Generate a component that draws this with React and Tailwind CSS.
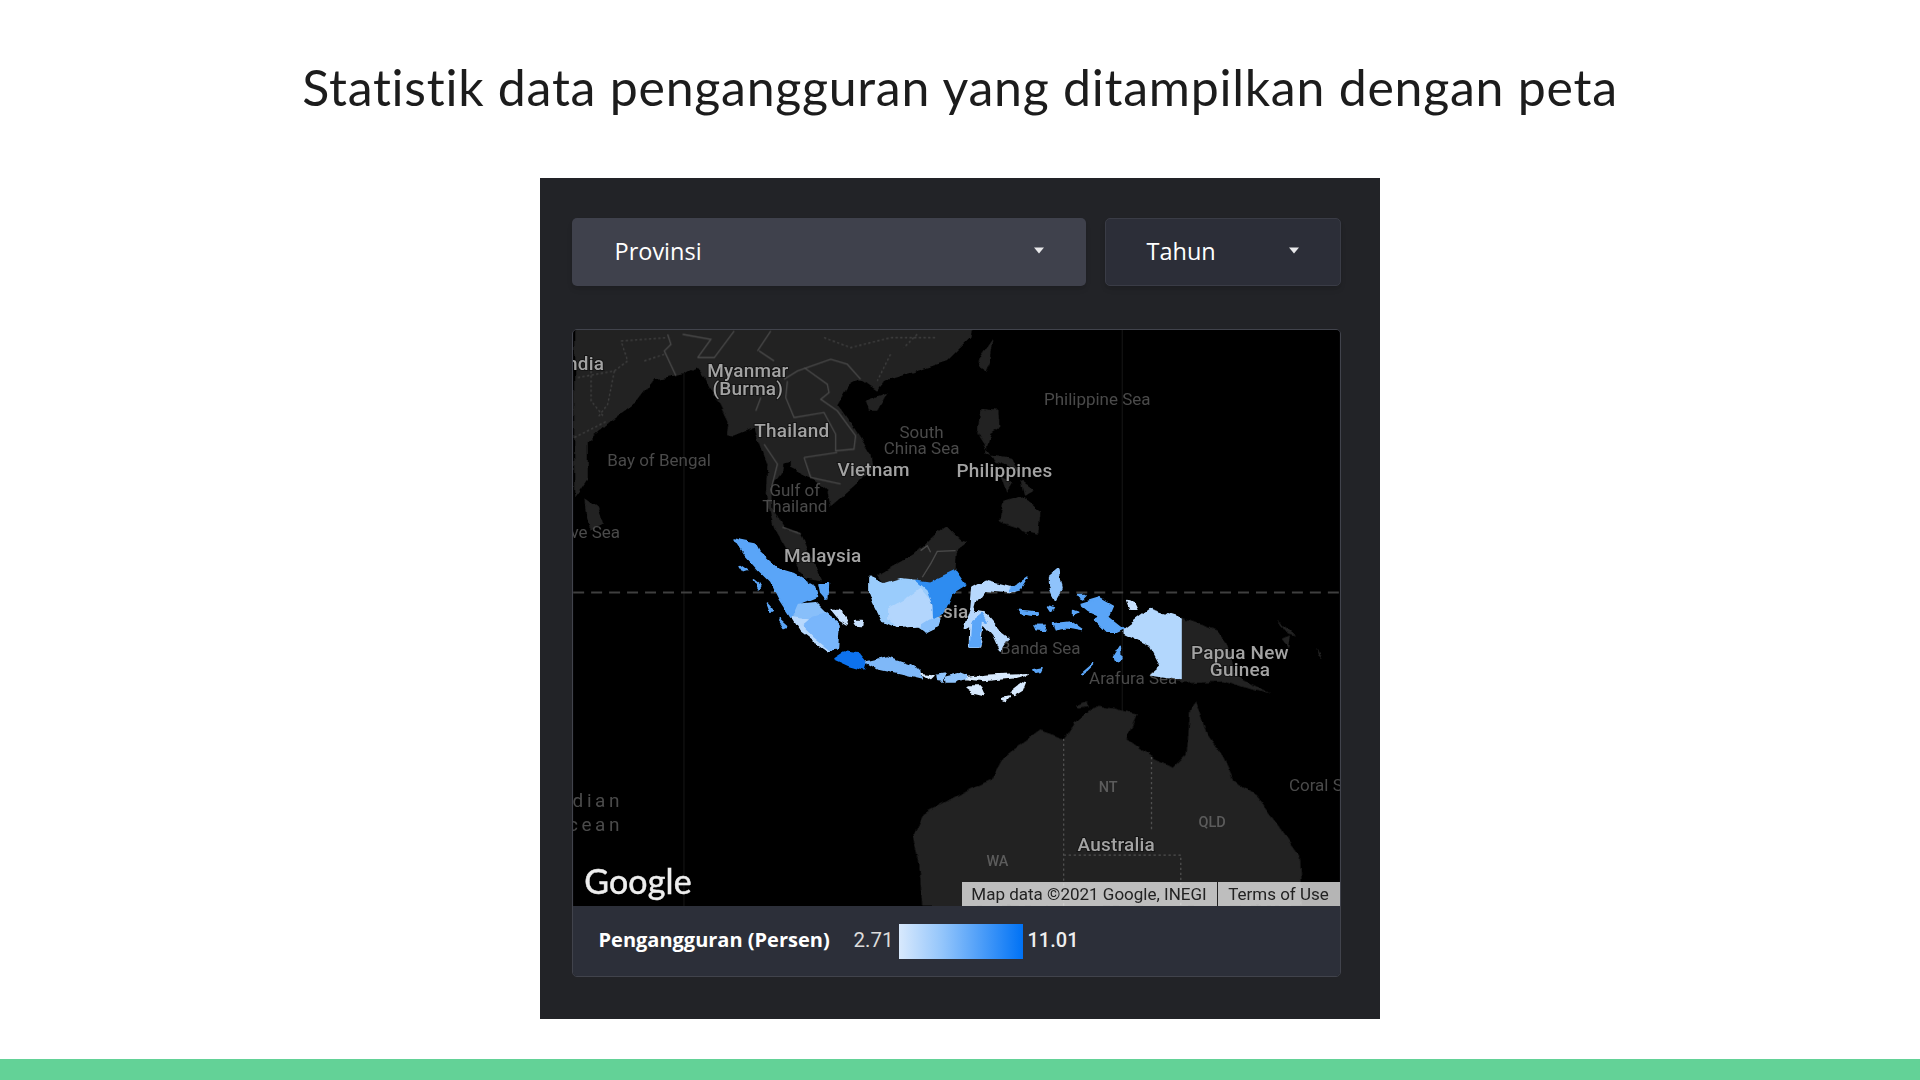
const LAND = "#232323";
const Z2 = "translate(570 320) scale(0.3333)";
const Z3 = "translate(700 510) scale(0.3333)";
const Z4 = "translate(960 510) scale(0.3333)";
const Z6 = "translate(940 700) scale(0.3333)";

const sea = { fontFamily: "Roboto, sans-serif", fontSize: 17, fill: "#4a4a4a" };
const place = { fontFamily: "Roboto, sans-serif", fontSize: 19, fontWeight: 500, letterSpacing: 0.2, fill: "#a3a3a3", stroke: "#000", strokeOpacity: 0.4, strokeWidth: 2, paintOrder: "stroke" };
const state = { fontFamily: "Roboto, sans-serif", fontSize: 14.5, fontWeight: 500, fill: "#5c5c5c" };

function P({ c, d, w = 5 }) {
  return <path fill={c} stroke={c} strokeWidth={w} strokeLinejoin="round" d={d} />;
}

function MapDrawing() {
  return (
    <svg viewBox="572 329 768 577" className="block w-full h-full">
      <defs>
        <filter id="rough" x="-5%" y="-5%" width="110%" height="110%">
          <feTurbulence type="fractalNoise" baseFrequency="0.09" numOctaves="2" seed="4" result="n" />
          <feDisplacementMap in="SourceGraphic" in2="n" scale="6" xChannelSelector="R" yChannelSelector="G" />
        </filter>
        <clipPath id="papua">
          <rect x="1000" y="560" width="181.7" height="200" />
        </clipPath>
      </defs>
      <rect x="572" y="329" width="768" height="577" fill="#000" />
      <path d="M683 329V906M1122 329V906" stroke="#171717" strokeWidth="1" />

      <g filter="url(#rough)">
        <g transform={Z2}>
          <path fill={LAND} d="M10 0L1210 0L1200 50L1130 120L1040 150L940 180L920 210L870 175L830 200L800 250L850 320L900 400L905 440L860 490L780 560L770 510L720 470L660 440L660 420L635 425L630 460L600 500L605 560L640 620L690 640L730 730L755 780L700 770L650 690L610 620L585 520L590 430L560 350L550 320L490 345L465 340L470 300L440 240L400 170L375 140L340 160L250 175L200 240L120 300L50 360L50 470L10 530Z" />
          <path fill={LAND} d="M40 530L80 560L100 610L60 630L45 590ZM885 240L950 215L920 270L895 270Z" />
        </g>
        <g fill={LAND}>
          <path d="M977 360L993 338L990 360L985 372ZM980 408L998 410L999 427L990 433L985 453L1012 457L1018 470L995 462L977 433Z" />
          <path d="M1004 500L1020 495L1040 510L1038 533L1025 530L1015 525L1000 520Z" />
          <path d="M1000 475L1012 482L1006 492ZM1020 480L1034 490L1024 496Z" />
        </g>
        <g transform={Z6} fill={LAND}>
          <path d="M-84 410L-50 340L80 270L150 240L190 170L300 90L370 115L400 70L470 15L590 40L560 115L640 175L700 200L740 160L750 30L765 0L800 100L850 170L880 240L950 290L1010 370L1080 470L1085 540L1085 620L-55 620L-65 480Z" />
          <path d="M405 20L440 5L450 20L415 25Z" />
        </g>
        <g transform={Z3}>
          <path fill={LAND} d="M530 195L570 170L640 130L700 75L740 45L780 85L800 92L770 115L765 180L690 215L650 210L600 205L550 220Z" />
        </g>
        <g transform={Z4} fill={LAND}>
          <path d="M640 325L665 322L770 360L800 400L830 500L940 555L850 530L790 510L665 517L640 510Z" />
          <path d="M950 325L1010 375L985 370ZM965 385L990 375L985 410ZM1065 410L1090 445L1075 435Z" />
          <path d="M340 640L400 590L530 610L500 660L340 660ZM110 30L170 0L240 0L235 40L200 70L170 50Z" />
        </g>
      </g>

      <g transform={Z2}>
        <g fill="none" stroke="#4a4a4a" strokeWidth="4">
          <path d="M640 175L680 150L780 115L830 130L870 175M650 180L645 230L670 290L760 275L795 340L795 390L850 385L855 345L800 270L750 235L775 215L770 190L700 140" />
          <path d="M555 270L570 230M580 370L620 430L600 510M700 410L800 395M700 410L720 470L810 490M490 30L430 110L380 110M560 90L600 30M290 40L300 70L280 90L315 165M335 40L420 55L380 110M565 90L610 120M635 620L690 640" />
        </g>
        <g fill="none" stroke="#474747" strokeWidth="3.5" strokeDasharray="7 7">
          <path d="M150 60L290 50M20 170L130 150L170 120L150 60M220 120L280 100M60 150L60 240L100 290M130 150L110 250L80 290M10 350L110 300M760 50L840 80L960 50L1100 50M960 100L920 180M1040 40L1000 80" />
        </g>
      </g>
      <g transform={Z3}>
        <path fill="none" stroke="#4d4d4d" strokeWidth="4" d="M660 120L680 105L690 125M765 120L710 122L690 160L665 200" />
      </g>
      <g transform={Z6} fill="none" stroke="#4f4f4f" strokeWidth="4" strokeDasharray="7 8">
        <path d="M370 115V620M634 170V395M370 465H722V620" />
      </g>

      <path d="M572 592H1340" stroke="#3f3f3f" strokeWidth="2" strokeDasharray="11 7" />

      <text {...place} x="603" y="369" textAnchor="end">India</text>
      <text {...place} x="747" y="376" textAnchor="middle">Myanmar</text>
      <text {...place} x="747" y="394" textAnchor="middle">(Burma)</text>
      <text {...place} x="791" y="436" textAnchor="middle">Thailand</text>
      <text {...place} x="873" y="475" textAnchor="middle">Vietnam</text>
      <text {...place} x="1004" y="476" textAnchor="middle">Philippines</text>
      <text {...place} x="822" y="561" textAnchor="middle">Malaysia</text>
      <text {...place} x="968" y="618" textAnchor="end">Indonesia</text>
      <text {...place} x="1240" y="659" textAnchor="middle">Papua New</text>
      <text {...place} x="1240" y="676" textAnchor="middle">Guinea</text>
      <text {...place} x="1116" y="851" textAnchor="middle">Australia</text>
      <text {...sea} x="921" y="437" textAnchor="middle">South</text>
      <text {...sea} x="921" y="453" textAnchor="middle">China Sea</text>
      <text {...sea} x="658" y="465" textAnchor="middle">Bay of Bengal</text>
      <text {...sea} x="794" y="495" textAnchor="middle">Gulf of</text>
      <text {...sea} x="794" y="511" textAnchor="middle">Thailand</text>
      <text {...sea} x="619" y="537" textAnchor="end">Laccadive Sea</text>
      <text {...sea} x="1097" y="404" textAnchor="middle">Philippine Sea</text>
      <text {...sea} x="1040" y="654" textAnchor="middle">Banda Sea</text>
      <text {...sea} x="1133" y="684" textAnchor="middle">Arafura Sea</text>
      <text {...sea} x="1289" y="791">Coral Sea</text>
      <text {...sea} x="622" y="807" textAnchor="end" letterSpacing="3.6" fontSize="19">Indian</text>
      <text {...sea} x="622" y="831" textAnchor="end" letterSpacing="3.6" fontSize="19">Ocean</text>
      <text {...state} x="1108" y="792" textAnchor="middle">NT</text>
      <text {...state} x="1212" y="827" textAnchor="middle">QLD</text>
      <text {...state} x="997" y="866" textAnchor="middle">WA</text>

      <g filter="url(#rough)">
        <g transform={Z3}>
          {/* Sumatra */}
          <P c="#5aa5f8" d="M100 85L160 97L175 125L230 175L280 190L340 225L350 260L290 285L270 320L235 265L210 215L170 175L130 130Z" />
          <P c="#88bffa" d="M290 285L345 280L375 310L325 325L275 320Z" />
          <P c="#79b6fb" d="M325 325L375 310L415 340L410 415L380 420L340 385L300 345Z" />
          <P c="#b9d9fd" d="M275 320L322 326L300 345L340 385L385 422L345 395L300 360Z" />
          <P c="#c7e0fd" d="M395 300L420 300L440 340L415 325ZM462 330L485 330L482 345L465 343Z" />
          <P c="#5aa5f8" d="M118 165L140 180L130 183ZM158 208L180 225L175 235ZM200 278L220 300L210 305ZM235 325L257 345L250 348ZM355 220L380 220L378 265L360 245Z" />
          {/* Kalimantan */}
          <P c="#9accfc" d="M505 200L550 220L600 205L650 210L680 240L700 300L720 325L715 350L680 365L650 345L590 350L545 330L520 280L505 240Z" />
          <P c="#b3d6fd" d="M565 295L620 265L660 235L690 270L700 320L660 345L590 350L565 325Z" />
          <P c="#2f8cf0" d="M650 210L690 215L765 180L795 222L750 250L725 310L700 320L698 280L680 235Z" />
          <P c="#89c0fb" d="M660 345L700 320L720 325L715 350L680 368Z" />
          {/* Java and the lesser islands */}
          <P c="#0a72ee" d="M400 445L430 425L470 430L495 460L490 478L445 465Z" />
          <P c="#7fb8f8" d="M495 455L560 440L620 460L660 480L665 505L600 490L530 475Z" />
          <P c="#d8eafe" d="M665 490L700 495L690 505ZM770 505L860 495L980 490L940 502L850 510L800 505ZM800 530L840 530L850 552L820 545ZM930 550L975 515L965 540L940 555ZM905 565L925 560L915 570Z" />
          <P c="#8fc3fb" d="M710 495L730 492L728 512L712 510ZM735 500L775 490L800 500L760 515L738 515Z" />
          {/* Sulawesi */}
          <P c="#b7d8fd" w={11} d="M820 235L855 215L930 235L960 228L925 243L850 235L825 270L815 305L850 310L900 370L920 385L900 415L880 370L845 330L835 410L810 410L812 340L795 350L815 290Z" />
          <P c="#5aa5f8" d="M925 240L980 203L960 235ZM815 335L845 312L860 335L845 330L835 412L810 412Z" />
          <P c="#5aa5f8" d="M955 300L1010 305L1005 315L960 308ZM1005 345L1040 345L1035 362L1010 360Z" />
        </g>
        {/* Maluku and Papua */}
        <g transform={Z4}>
          <P c="#8fc3fb" d="M265 200L295 175L300 210L305 235L285 270L265 220Z" />
          <P c="#5aa5f8" d="M175 300L230 305L225 315L180 308ZM225 345L260 345L255 362L230 360ZM280 340L330 335L365 360L320 352L285 358ZM350 255L380 255L370 265ZM340 300L355 305L340 312ZM262 290L285 295L270 302ZM460 440L480 408L482 445L465 452ZM365 490L400 460L380 480ZM215 478L245 472L240 483L220 485Z" />
          <P c="#5aa5f8" d="M360 280L420 262L460 285L445 320L490 355L470 365L440 365L425 350L400 325L420 315L385 300Z" />
          <P c="#c7e0fd" d="M500 270L520 275L530 295L510 295Z" />
        </g>
      </g>
      <g clipPath="url(#papua)">
        <g filter="url(#rough)">
          <path transform={Z4} fill="#b3d7fd" d="M490 355L570 295L700 335L700 515L565 495L600 465L570 410L490 370Z" />
        </g>
      </g>
      <text x="583" y="894" fontFamily="Lato, sans-serif" fontSize="34" fontWeight="400" fill="#eee" stroke="#eee" strokeWidth="0.5" letterSpacing="0.2">Google</text>
    </svg>
  );
}

function Caret() {
  return (
    <svg width="12" height="7" viewBox="0 0 12 7" className="shrink-0 -translate-y-px">
      <path d="M1 0.5H11L6 6.5Z" fill="#e8e8ea" />
    </svg>
  );
}

export default function App() {
  return (
    <div className="relative flex flex-col items-center w-full h-[1080px] bg-white overflow-hidden font-['Open_Sans',sans-serif]">
      <h1 className="mt-[51px] h-[72px] leading-[72px] text-[50px] font-normal text-[#1c1c1c] font-['Lato',sans-serif] tracking-[0.75px] whitespace-nowrap">
        Statistik data pengangguran yang ditampilkan dengan peta
      </h1>
      <div className="mt-[55px] w-[840px] h-[841px] ml-[-1px] bg-[#222327] pt-[40px] pl-[32px] pr-[39px] blur-[0.5px]">
        <div className="flex gap-[19px] h-[68px]">
          <div className="w-[514px] flex items-center justify-between rounded-[5px] bg-[#3f414c] pl-[43px] pr-[41px] text-white text-[23.5px] pb-[1px] shadow-md">
            <span>Provinsi</span>
            <Caret />
          </div>
          <div className="w-[236px] flex items-center justify-between rounded-[5px] bg-[#2c2e38] border border-[#3a3c46] pl-[41px] pr-[40px] text-white text-[23.5px] pb-[1px] shadow-md">
            <span>Tahun</span>
            <Caret />
          </div>
        </div>
        <div className="mt-[43px] w-[769px] h-[648px] flex flex-col rounded-[5px] border border-[#41434c] overflow-hidden">
          <div className="relative h-[576px] shrink-0">
            <MapDrawing />
            <div className="absolute right-0 bottom-0 flex h-[24px] text-[17px] leading-[25px] text-[#222] font-['Roboto',sans-serif]">
              <span className="w-[255px] text-center bg-[#ffffffb5]">Map data ©2021 Google, INEGI</span>
              <span className="ml-px w-[122px] text-center bg-[#ffffffb5]">Terms of Use</span>
            </div>
          </div>
          <div className="flex-1 flex items-center bg-[#2c2f39] pl-[26px] pb-[2px] text-white">
            <span className="w-[255px] text-[20px] font-bold whitespace-nowrap">Pengangguran (Persen)</span>
            <span className="w-[45px] text-[20.5px] text-[#dcdcdc] font-['Roboto',sans-serif]">2.71</span>
            <div className="w-[124px] h-[35px] mt-[2px] bg-[linear-gradient(90deg,#d8e9fd,#93c5fb_35%,#0072f5)]" />
            <span className="ml-[5px] text-[20px] font-medium text-[#eee] font-['Roboto',sans-serif]">11.01</span>
          </div>
        </div>
      </div>
      <div className="mt-auto w-full h-[21px] bg-[#63d297]" />
    </div>
  );
}
